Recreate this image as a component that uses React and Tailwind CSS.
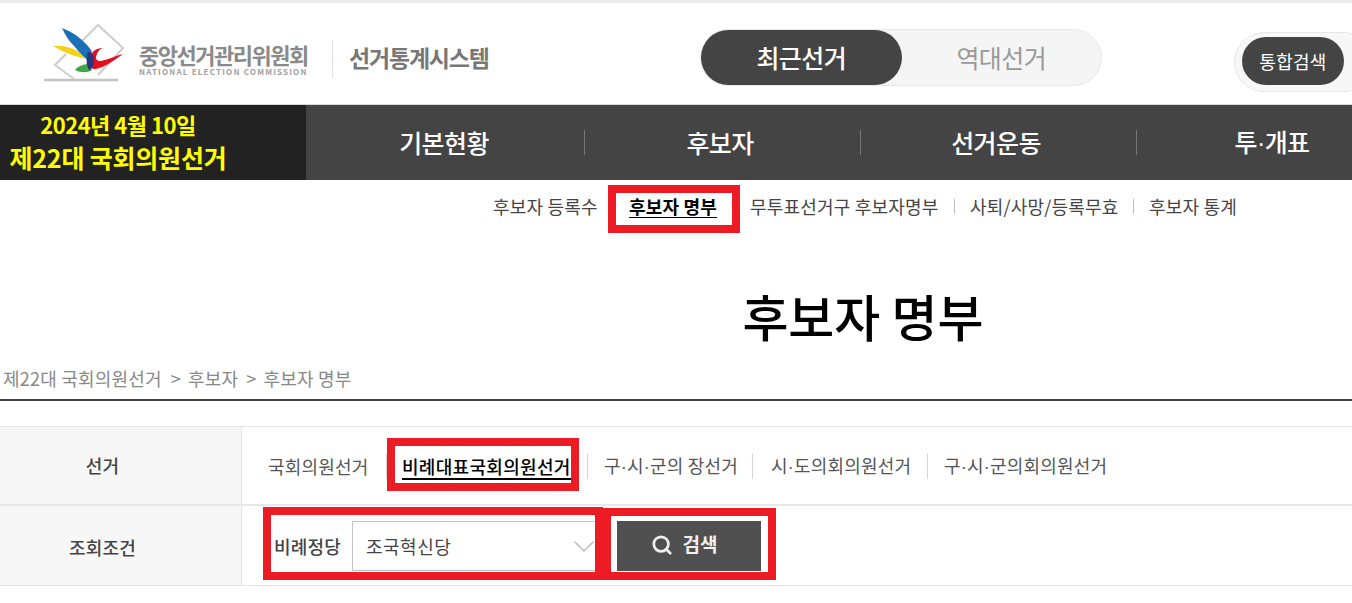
import React from "react";
import { Search } from "lucide-react";

const ELECTIONS_AFTER = [
  { parts: ["구", "시", "군의 장선거"], width: "w-[148px]", gap: "ml-[16px]" },
  { parts: ["시", "도의회의원선거"], width: "w-[156px]", gap: "ml-[18px]" },
  { parts: ["구", "시", "군의회의원선거"], width: "", gap: "ml-[16px]" },
];

// the middle dot of the CJK font is too wide, so it comes from Liberation Sans
function Dotted({ parts }) {
  return parts.map((part, i) => (
    <React.Fragment key={part}>
      {i > 0 && <span className="font-['Liberation_Sans',sans-serif]">·</span>}
      {part}
    </React.Fragment>
  ));
}

const NAV_ITEMS = [["기본현황"], ["후보자"], ["선거운동"], ["투", "개표"]];

function Logo() {
  return (
    <svg width="92" height="62" viewBox="0 0 92 62" className="shrink-0">
      {/* ballot box */}
      <path d="M38 20 L56 2 L81 25 L56 52 M24 31 L13 42 L32 56" fill="none" stroke="#cdcdcd" strokeWidth="2" />
      <path d="M2 57 H76" stroke="#c4c4c4" strokeWidth="2.5" />
      {/* bird */}
      <path d="M20 5 C31 9 42 17 49 27 C51 31 50 36 47 38 C41 34 37 29 33 24 C27 18 23 12 20 5Z" fill="#1c6fb5" />
      <path d="M11 23 C22 22 32 25 38 30 L43 36 C32 33 21 29 11 23Z" fill="#f7d117" />
      <path d="M33 47 C37 42 43 41 48 41 L50 47 C45 50 39 50 33 47Z" fill="#3fa648" />
      <path d="M61 25 C54 25 49 29 48 35 C47 42 49 47 54 46 C63 44 73 37 81 31 C73 33 66 37 58 38 C54 38 53 35 55 31 C56 28 58 26 61 25Z" fill="#e4101f" />
      <path d="M46 29 C50 29 52 33 52 38 C52 42 50 46 47 47 C44 42 44 34 46 29Z" fill="#24397f" />
    </svg>
  );
}

function Sep({ className }) {
  return <span className={`w-px shrink-0 ${className}`} />;
}

function Redbox({ className }) {
  return <div className={`absolute border-[8px] border-[#ed1c24] pointer-events-none ${className}`} />;
}

export default function App() {
  return (
    <div className="relative w-[1352px] h-[603px] overflow-hidden bg-white font-['Noto_Sans_CJK_KR','Noto_Sans',sans-serif] text-[#444]">
      {/* header */}
      <header className="h-[105px] border-t-[3px] border-b border-t-[#ececec] border-b-[#d8d8d8] flex items-start">
        <div className="w-[700px] shrink-0 flex items-start pl-[42px] pt-[20px]">
          <Logo />
          <div className="ml-[5px] mt-[17px] w-[170px] text-[#8a8a8a]">
            <p className="text-[22px] leading-[28px] font-bold tracking-[-1.5px] whitespace-nowrap">중앙선거관리위원회</p>
            <p className="text-[8px] leading-[8px] font-bold tracking-[1.2px] text-[#a0a0a0] whitespace-nowrap">NATIONAL ELECTION COMMISSION</p>
          </div>
          <Sep className="h-[38px] mt-[17px] ml-[23px] bg-[#e2e2e2]" />
          <p className="ml-[16px] mt-[19px] text-[23px] leading-[30px] font-bold tracking-[-1.2px] text-[#777] whitespace-nowrap">선거통계시스템</p>
        </div>
        <div className="mt-[26px] w-[402px] h-[57px] shrink-0 rounded-full bg-[#f5f5f5] border border-[#e8e8e8] flex items-center text-[25px] tracking-[-0.6px]">
          <div className="w-[201px] h-[55px] rounded-full bg-[#444] text-white flex items-center justify-center font-medium">최근선거</div>
          <div className="w-[200px] text-center text-[#999]">역대선거</div>
        </div>
        <div className="mt-[29px] ml-[132px] w-[140px] h-[60px] shrink-0 rounded-full bg-[#f7f7f7] border border-[#e8e8e8] pl-[7px] pt-[4px]">
          <div className="w-[102px] h-[48px] rounded-full bg-[#444] text-white text-[18px] tracking-[0.3px] flex items-center justify-center">통합검색</div>
        </div>
      </header>

      {/* main nav */}
      <nav className="h-[75px] bg-[#444] flex items-center">
        <div className="w-[306px] h-full shrink-0 bg-[#222] pt-[4px] text-[#ffff00] font-bold whitespace-nowrap">
          <div className="w-[236px] text-center">
            <p className="text-[22px] leading-[30px] tracking-[-0.5px]">2024년 4월 10일</p>
            <p className="text-[25px] leading-[37px] tracking-[-0.2px]">제22대 국회의원선거</p>
          </div>
        </div>
        {NAV_ITEMS.map((parts, i) => (
          <div key={parts[0]} className="relative w-[276px] shrink-0 text-center text-white text-[25px] font-medium tracking-[-0.6px]">
            <Dotted parts={parts} />
            {i < 3 && <span className="absolute right-[-3px] top-[6px] h-[25px] w-px bg-[#777]" />}
          </div>
        ))}
      </nav>

      {/* sub nav */}
      <div className="h-[53px] flex items-center text-[18px] tracking-[0.2px] whitespace-nowrap pl-[493px]">
        <span className="w-[136px]">후보자 등록수</span>
        <span className="w-[121px] font-bold text-black underline underline-offset-[3px]">후보자 명부</span>
        <span className="w-[204px]">무투표선거구 후보자명부</span>
        <Sep className="h-[15px] mr-[15px] bg-[#bbb]" />
        <span className="w-[163px]">사퇴/사망/등록무효</span>
        <Sep className="h-[15px] mr-[15px] bg-[#bbb]" />
        <span>후보자 통계</span>
      </div>

      {/* title */}
      <h1 className="mt-[44px] h-[76px] pl-[374px] text-center text-[50px] leading-[76px] font-medium text-black">후보자 명부</h1>

      {/* breadcrumb */}
      <div className="h-[39px] mt-[9px] border-b-2 border-[#444] pl-[3px] pt-[2px] flex text-[18px] leading-[28px] text-[#888] tracking-[0.2px] whitespace-nowrap">
        <span>제22대 국회의원선거</span>
        <span className="ml-[9px]">&gt;</span>
        <span className="ml-[7px]">후보자</span>
        <span className="ml-[8px]">&gt;</span>
        <span className="ml-[7px]">후보자 명부</span>
      </div>

      {/* search form */}
      <div className="mt-[25px] border-t border-b border-[#e5e5e5]">
        <div className="flex h-[79px] border-b-2 border-[#e8e8e8]">
          <div className="w-[242px] shrink-0 bg-[#f7f7f7] border-r border-[#e5e5e5] flex items-center justify-center pr-[36px] text-[18px] font-medium tracking-[0.2px]">선거</div>
          <div className="flex items-center pl-[26px] pt-[2px] text-[18px] tracking-[0.2px] whitespace-nowrap text-[#555]">
            <span className="w-[118px]">국회의원선거</span>
            <Sep className="h-[25px] bg-[#d5d5d5]" />
            <span className="ml-[15px] w-[169px] font-medium text-black border-b-2 border-black leading-[24px] tracking-[0.3px]">비례대표국회의원선거</span>
            <Sep className="h-[25px] ml-[16px] bg-[#d5d5d5]" />
            {ELECTIONS_AFTER.map((item, i) => (
              <React.Fragment key={item.parts.join()}>
                <span className={`${item.gap} ${item.width}`}><Dotted parts={item.parts} /></span>
                {i < 2 && <Sep className="h-[25px] bg-[#d5d5d5]" />}
              </React.Fragment>
            ))}
          </div>
        </div>
        <div className="flex h-[79px]">
          <div className="w-[242px] shrink-0 bg-[#f7f7f7] border-r border-[#e5e5e5] flex items-center justify-center pr-[36px] pt-[4px] text-[18px] font-medium tracking-[0.2px]">조회조건</div>
          <div className="flex items-start pl-[32px] pt-[15px]">
            <span className="w-[78px] h-[50px] flex items-center text-[18px] font-medium tracking-[0.2px]">비례정당</span>
            <div className="w-[256px] h-[50px] border border-[#c4c4c4] flex items-center justify-between pl-[13px] pr-[13px] text-[18px] tracking-[0.5px]">
              조국혁신당
              <svg width="20" height="11" viewBox="0 0 20 11" fill="none" stroke="#b5b5b5" strokeWidth="1.3">
                <path d="M0.5 0.5 L10 10 L19.5 0.5" />
              </svg>
            </div>
            <button className="ml-[9px] w-[144px] h-[50px] bg-[#505050] text-[#f0f0f0] text-[19px] font-bold flex items-center justify-center gap-[10px] pb-[3px] pr-[10px]">
              <Search className="w-[22px] h-[22px]" strokeWidth={3} />
              검색
            </button>
          </div>
        </div>
      </div>

      {/* red highlight boxes drawn over the page */}
      <Redbox className="left-[608px] top-[185px] w-[132px] h-[48px]" />
      <Redbox className="left-[387px] top-[438px] w-[192px] h-[53px]" />
      <Redbox className="left-[263px] top-[507px] w-[340px] h-[73px]" />
      <Redbox className="left-[603px] top-[508px] w-[173px] h-[72px]" />
    </div>
  );
}
